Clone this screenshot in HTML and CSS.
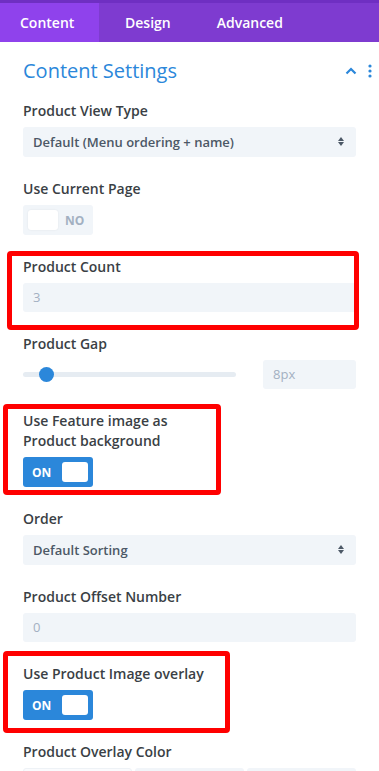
FILE: index.html
```html
<!DOCTYPE html>
<html lang="en">

<head>
    <meta charset="UTF-8">
    <meta name="viewport" content="width=device-width, initial-scale=1.0">
    <title>Content Settings</title>
    <link rel="stylesheet" href="styles.css">
</head>

<body>
    <div class="tabs">
        <div class="tab active">Content</div>
        <div class="tab">Design</div>
        <div class="tab">Advanced</div>
    </div>

    <div class="panel">
        <div class="panel-head">
            <h2>Content Settings</h2>
            <div class="head-icons">
                <svg width="12" height="8" viewBox="0 0 12 8"><path d="M1.5 6.5 L6 2 L10.5 6.5" fill="none" stroke="#2b87da" stroke-width="2.2"/></svg>
                <svg width="4" height="14" viewBox="0 0 4 14"><circle cx="2" cy="2" r="1.6" fill="#2b87da"/><circle cx="2" cy="7" r="1.6" fill="#2b87da"/><circle cx="2" cy="12" r="1.6" fill="#2b87da"/></svg>
            </div>
        </div>

        <div class="field">
            <div class="label">Product View Type</div>
            <div class="select">Default (Menu ordering + name)<span class="arrows"></span></div>
        </div>

        <div class="field">
            <div class="label">Use Current Page</div>
            <div class="toggle off"><span class="knob"></span><span class="tlabel">NO</span></div>
        </div>

        <div class="field">
            <div class="label">Product Count</div>
            <div class="input">3</div>
        </div>

        <div class="field">
            <div class="label">Product Gap</div>
            <div class="range-row">
                <div class="track"><span class="thumb"></span></div>
                <div class="input small">8px</div>
            </div>
        </div>

        <div class="field">
            <div class="label">Use Feature image as<br>Product background</div>
            <div class="toggle on"><span class="tlabel">ON</span><span class="knob"></span></div>
        </div>

        <div class="field">
            <div class="label">Order</div>
            <div class="select">Default Sorting<span class="arrows"></span></div>
        </div>

        <div class="field">
            <div class="label">Product Offset Number</div>
            <div class="input">0</div>
        </div>

        <div class="field">
            <div class="label">Use Product Image overlay</div>
            <div class="toggle on"><span class="tlabel">ON</span><span class="knob"></span></div>
        </div>

        <div class="field">
            <div class="label">Product Overlay Color</div>
            <div class="swatches">
                <div class="swatch first"></div>
                <div class="swatch"></div>
                <div class="swatch"></div>
            </div>
        </div>

        <!-- red highlight boxes drawn over the settings -->
        <div class="mark mark-count"></div>
        <div class="mark mark-feature"></div>
        <div class="mark mark-overlay"></div>
    </div>
</body>

</html>
```
FILE: styles.css
```css
/* page */
html,
body {
    height: 771px;
    overflow: hidden;
}

body {
    margin: 0;
    background: #fff;
    font-family: "Open Sans", "Noto Sans", sans-serif;
    color: #32373c;
}

/* purple tab bar */
.tabs {
    display: flex;
    height: 39px;
    border-top: 3px solid #6f2fc2;
    background: #7e3bd0;
}

.tab {
    color: #fff;
    font-weight: 600;
    font-size: 14px;
    line-height: 39px;
    padding: 0 27px 0 20px;
}

.tab.active {
    background: #8f42ec;
    width: 52px;
}

.tab:nth-child(2) {
    padding-left: 26px;
    padding-right: 26px;
}

.tab:nth-child(3) {
    padding-left: 20px;
}

/* settings panel */
.panel {
    position: relative;
    padding: 15px 23px 0 23px;
}

.panel-head {
    display: flex;
    align-items: center;
    justify-content: space-between;
    height: 28px;
    margin-bottom: 16px;
}

.panel-head h2 {
    margin: 0;
    font-size: 20px;
    font-weight: 400;
    color: #2b87da;
    line-height: 28px;
}

.head-icons {
    display: flex;
    align-items: center;
    gap: 11px;
    margin-right: -16px;
}

.field {
    margin-bottom: 22px;
}

.label {
    font-size: 14px;
    font-weight: 600;
    line-height: 20px;
    margin-bottom: 6px;
    color: #3a3f45;
}

/* select and inputs */
.select,
.input {
    height: 30px;
    line-height: 30px;
    background: #f1f5f9;
    border-radius: 3px;
    padding: 0 10px;
    font-size: 13px;
    position: relative;
}

.select {
    color: #4c5866;
    font-weight: 600;
}

.input {
    color: #a3b0c2;
    height: 29px;
    line-height: 29px;
}

.arrows {
    position: absolute;
    right: 12px;
    top: 10px;
    width: 0;
    height: 0;
    border-left: 3.5px solid transparent;
    border-right: 3.5px solid transparent;
    border-bottom: 4px solid #4c5866;
}

.arrows::after {
    content: "";
    position: absolute;
    left: -3.5px;
    top: 5px;
    border-left: 3.5px solid transparent;
    border-right: 3.5px solid transparent;
    border-top: 4px solid #4c5866;
}

/* toggles */
.toggle {
    display: flex;
    align-items: center;
    width: 70px;
    height: 30px;
    box-sizing: border-box;
    padding: 5px;
    border-radius: 3px;
    font-size: 12px;
    font-weight: 700;
}

.toggle .knob {
    width: 30px;
    height: 20px;
    background: #fff;
    border-radius: 3px;
}

.toggle.off {
    background: #f1f5f9;
}

.toggle.off .knob {
    box-shadow: 0 0 2px rgba(0, 0, 0, 0.08);
}

.toggle.off .tlabel {
    color: #a2b0c1;
    margin-left: 7px;
}

.toggle.on {
    background: #2b87da;
}

.toggle.on .tlabel {
    color: #fff;
    margin-left: 4px;
    margin-right: 11px;
}

/* range slider */
.range-row {
    display: flex;
    align-items: center;
    height: 29px;
}

.track {
    position: relative;
    width: 213px;
    height: 5px;
    border-radius: 3px;
    background: #e6ecf2;
}

.thumb {
    position: absolute;
    left: 16px;
    top: -5px;
    width: 15px;
    height: 15px;
    border-radius: 50%;
    background: #2b87da;
}

.input.small {
    margin-left: auto;
    width: 73px;
}

/* color swatches */
.swatches {
    display: grid;
    grid-template-columns: 1fr 1fr 1fr;
    gap: 3px;
}

.swatch {
    height: 30px;
    background: #f1f5f9;
    border-radius: 3px;
}

.swatch.first {
    background: #fafbfd;
    border: 1px solid #eef2f6;
}

/* red highlight boxes */
.mark {
    position: absolute;
    border: 5px solid #f00;
    border-radius: 4px;
    box-sizing: border-box;
}

.mark-count {
    left: 7px;
    top: 209px;
    width: 352px;
    height: 79px;
}

.mark-feature {
    left: 3px;
    top: 362px;
    width: 218px;
    height: 91px;
}

.mark-overlay {
    left: 3px;
    top: 609px;
    width: 227px;
    height: 82px;
}
```
